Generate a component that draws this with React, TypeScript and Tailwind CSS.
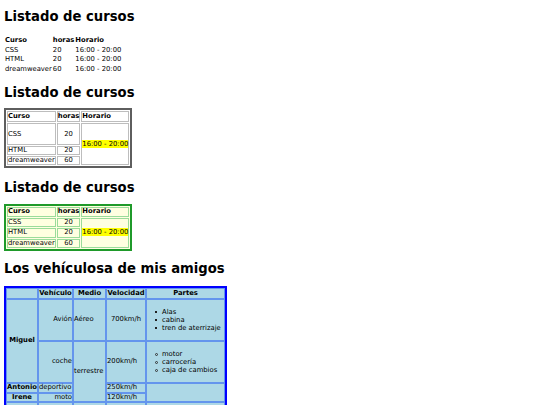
const cursos = [
  { nombre: 'CSS', horas: 20 },
  { nombre: 'HTML', horas: 20 },
  { nombre: 'dreamweaver', horas: 60 },
];

const horario = '16:00 - 20:00';

function PlainTable() {
  return (
    <table className="mt-[11px] border-separate border-spacing-[1px]">
      <tbody>
        <tr>
          <th className="p-0 text-left font-bold leading-[8.5px]">Curso</th>
          <th className="p-0 text-left font-bold leading-[8.5px]">horas</th>
          <th className="p-0 text-left font-bold leading-[8.5px]">Horario</th>
        </tr>
        {cursos.map((c) => (
          <tr key={c.nombre}>
            <td className="p-0 leading-[8.5px]">{c.nombre}</td>
            <td className="p-0 leading-[8.5px]">{c.horas}</td>
            <td className="p-0 leading-[8.5px]">{horario}</td>
          </tr>
        ))}
      </tbody>
    </table>
  );
}

function GrayTable() {
  const cell = 'border border-[#bdbdbd] px-0 py-0 leading-[7px]';
  return (
    <table className="mt-[8.5px] border-2 border-[#5e5e5e] border-separate border-spacing-[1px] bg-white">
      <tbody>
        <tr>
          <td className={`${cell} font-bold h-[11px]`}>Curso</td>
          <td className={`${cell} font-bold`}>horas</td>
          <td className={`${cell} font-bold`}>Horario</td>
        </tr>
        <tr>
          <td className={`${cell} h-[22px]`}>CSS</td>
          <td className={`${cell} text-center`}>20</td>
          <td className={cell} rowSpan={3}>
            <span className="bg-[#ffff00]">{horario}</span>
          </td>
        </tr>
        <tr>
          <td className={`${cell} h-[9px]`}>HTML</td>
          <td className={`${cell} text-center`}>20</td>
        </tr>
        <tr>
          <td className={`${cell} h-[9px]`}>dreamweaver</td>
          <td className={`${cell} text-center`}>60</td>
        </tr>
      </tbody>
    </table>
  );
}

function GreenTable() {
  const cell = 'border border-[#9bdc9b] px-0 py-0 leading-[7.5px]';
  return (
    <table className="mt-[9.5px] border-2 border-[#1f9a2a] border-separate border-spacing-[1px] bg-[#ffffe0]">
      <tbody>
        <tr>
          <td className={`${cell} font-bold`}>Curso</td>
          <td className={`${cell} font-bold`}>horas</td>
          <td className={`${cell} font-bold`}>Horario</td>
        </tr>
        <tr>
          <td className={cell}>CSS</td>
          <td className={`${cell} text-center`}>20</td>
          <td className={cell} rowSpan={3}>
            <span className="bg-[#ffff00]">{horario}</span>
          </td>
        </tr>
        <tr>
          <td className={cell}>HTML</td>
          <td className={`${cell} text-center`}>20</td>
        </tr>
        <tr>
          <td className={cell}>dreamweaver</td>
          <td className={`${cell} text-center`}>60</td>
        </tr>
      </tbody>
    </table>
  );
}

function Lista({ items, circle }: { items: string[]; circle?: boolean }) {
  return (
    <ul className="my-[8px] leading-[8px]">
      {items.map((item) => (
        <li key={item} className="flex items-center">
          {circle ? (
            <span className="ml-[8px] mr-[4px] h-[3px] w-[3px] shrink-0 rounded-full border-[0.6px] border-[#333]" />
          ) : (
            <span className="ml-[8px] mr-[5px] h-[2px] w-[2px] shrink-0 bg-[#222]" />
          )}
          <span className="whitespace-nowrap">{item}</span>
        </li>
      ))}
    </ul>
  );
}

function VehiculosTable() {
  const cell = 'border border-[#6495ed] p-0 leading-[7.5px] align-middle';
  const head = 'border border-[#6495ed] p-0 leading-[9px] font-bold text-center';
  return (
    <table className="mt-[10.5px] w-[223px] table-fixed border-2 border-[#0000ff] border-separate border-spacing-0 bg-[#add8e6]">
      <colgroup>
        <col className="w-[32px]" />
        <col className="w-[35px]" />
        <col className="w-[33px]" />
        <col className="w-[40px]" />
        <col className="w-[79px]" />
      </colgroup>
      <tbody>
        <tr>
          <th className={head}></th>
          <th className={head}>Vehículo</th>
          <th className={head}>Medio</th>
          <th className={head}>Velocidad</th>
          <th className={head}>Partes</th>
        </tr>
        <tr>
          <th className={`${cell} font-bold text-center`} rowSpan={2}>
            Miguel
          </th>
          <td className={`${cell} text-right`}>Avión</td>
          <td className={cell}>Aéreo</td>
          <td className={`${cell} text-center`}>700km/h</td>
          <td className={cell}>
            <Lista items={['Alas', 'cabina', 'tren de aterrizaje']} />
          </td>
        </tr>
        <tr>
          <td className={`${cell} text-right`}>coche</td>
          <td className={cell} rowSpan={3}>
            terrestre
          </td>
          <td className={cell}>200km/h</td>
          <td className={cell}>
            <Lista items={['motor', 'carrocería', 'caja de cambios']} circle />
          </td>
        </tr>
        <tr>
          <th className={`${cell} font-bold text-center`}>Antonio</th>
          <td className={cell}>deportivo</td>
          <td className={cell}>250km/h</td>
          <td className={cell} rowSpan={2}></td>
        </tr>
        <tr>
          <th className={`${cell} font-bold text-center`}>Irene</th>
          <td className={`${cell} text-right`}>moto</td>
          <td className={cell}>120km/h</td>
        </tr>
        <tr>
          <td className={`${cell} h-[30px]`}></td>
          <td className={cell}></td>
          <td className={cell}></td>
          <td className={cell}></td>
          <td className={cell}></td>
        </tr>
      </tbody>
    </table>
  );
}

export default function App() {
  return (
    <div className="min-h-screen bg-white pl-[4px] pt-[9px] font-['DejaVu_Sans',sans-serif] text-[6.8px] text-black">
      <h2 className="text-[13.2px] leading-[15px] font-bold">Listado de cursos</h2>
      <PlainTable />
      <h2 className="mt-[10.5px] text-[13.2px] leading-[15px] font-bold">Listado de cursos</h2>
      <GrayTable />
      <h2 className="mt-[11.5px] text-[13.2px] leading-[15px] font-bold">Listado de cursos</h2>
      <GreenTable />
      <h2 className="mt-[9.5px] text-[13.2px] leading-[15px] font-bold">Los vehículosa de mis amigos</h2>
      <VehiculosTable />
    </div>
  );
}
